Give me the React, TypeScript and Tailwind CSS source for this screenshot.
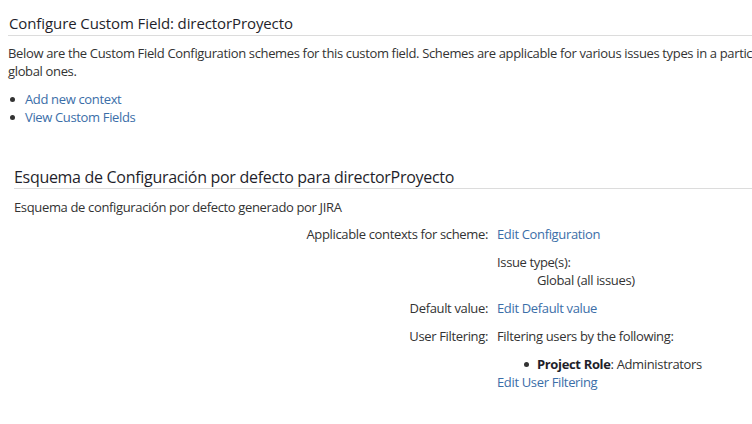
export default function App() {
  const link = 'text-[#3b6ea8] hover:underline';

  return (
    <div className="h-[424px] w-[752px] overflow-hidden bg-white font-['Open_Sans',sans-serif] text-[13px] tracking-[-0.35px] text-[#333]">
      {/* Page header */}
      <div className="pl-2 pt-[13px]">
        <h2 className="border-b border-[#dcdcdc] pb-[2px] pl-px text-[15px] font-medium leading-[20px] tracking-[-0.1px] text-[#1f1f2b]">
          Configure Custom Field: directorProyecto
        </h2>
        <p className="mt-[8px] whitespace-nowrap leading-[18px]">
          Below are the Custom Field Configuration schemes for this custom field. Schemes are applicable for various issues types in a particular context. Project specific schemes override
          <br />
          global ones.
        </p>
        <ul className="mt-[10px] leading-[18px]">
          <li className="flex items-center">
            <span className="mx-[2px] inline-block h-[5px] w-[5px] rounded-full bg-[#333]" />
            <a className={`ml-[8px] ${link}`} href="#">Add new context</a>
          </li>
          <li className="flex items-center">
            <span className="mx-[2px] inline-block h-[5px] w-[5px] rounded-full bg-[#333]" />
            <a className={`ml-[8px] ${link}`} href="#">View Custom Fields</a>
          </li>
        </ul>
      </div>

      {/* Default scheme */}
      <div className="mt-[41px] pl-[14px]">
        <h3 className="border-b border-[#dcdcdc] pb-px text-[16px] font-medium leading-[20px] tracking-[-0.3px] text-[#1f1f2b]">
          Esquema de Configuración por defecto para directorProyecto
        </h3>
        <p className="mt-[9px] leading-[18px]">Esquema de configuración por defecto generado por JIRA</p>

        <div className="mt-[9px] grid grid-cols-[474px_1fr] gap-x-[9px] leading-[18px]">
          <div className="text-right">Applicable contexts for scheme:</div>
          <div>
            <a className={link} href="#">Edit Configuration</a>
          </div>

          <div />
          <div className="mt-[10px]">
            <div>Issue type(s):</div>
            <div className="pl-[40px]">Global (all issues)</div>
          </div>

          <div className="mt-[10px] text-right">Default value:</div>
          <div className="mt-[10px]">
            <a className={link} href="#">Edit Default value</a>
          </div>

          <div className="mt-[10px] text-right">User Filtering:</div>
          <div className="mt-[10px]">
            <div>Filtering users by the following:</div>
            <ul className="mt-[10px] pl-[27px]">
              <li className="flex items-center">
                <span className="mr-[8px] inline-block h-[5px] w-[5px] rounded-full bg-[#333]" />
                <span>
                  <b className="font-bold text-[#1f1f2b]">Project Role</b>: Administrators
                </span>
              </li>
            </ul>
            <a className={link} href="#">Edit User Filtering</a>
          </div>
        </div>
      </div>
    </div>
  );
}
